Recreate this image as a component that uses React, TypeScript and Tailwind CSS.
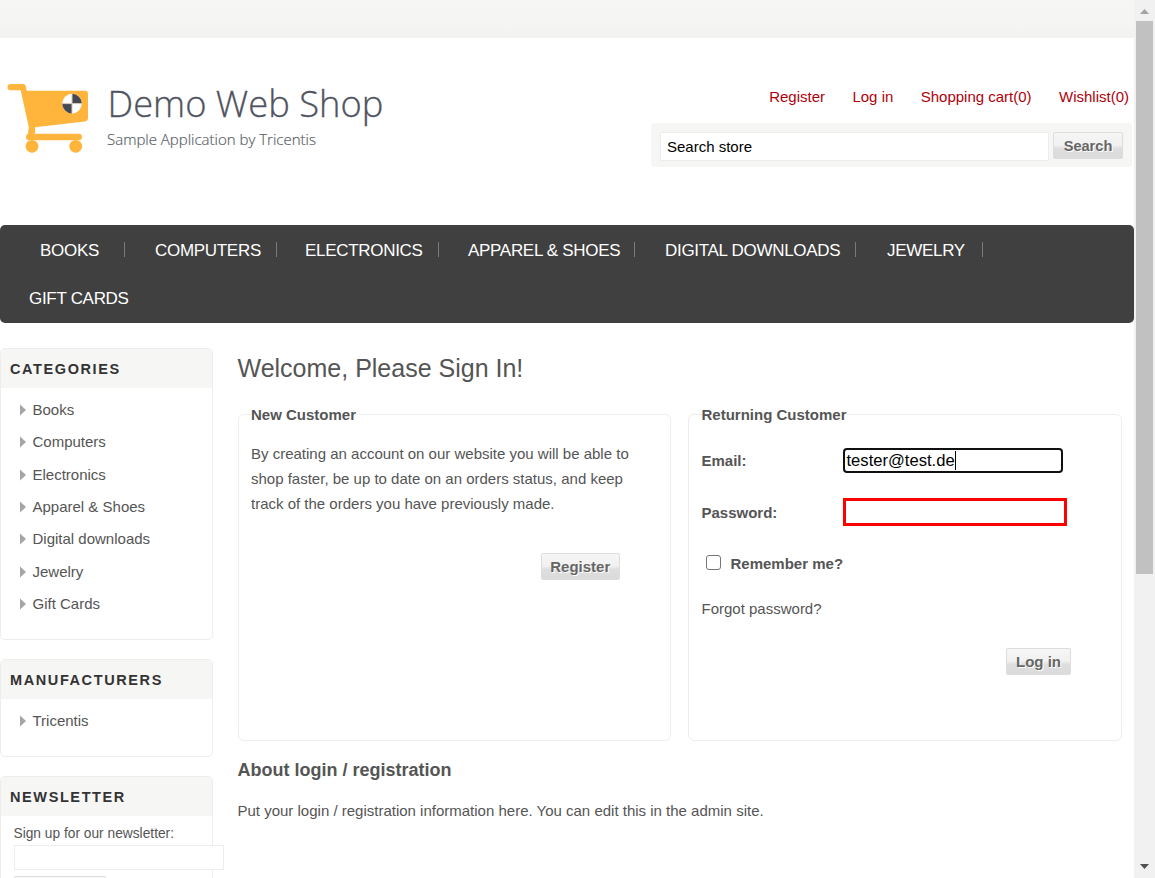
import type { ReactNode } from "react";

const sans = "font-['Liberation_Sans',Arial,sans-serif]";

function Logo() {
  return (
    <div className="flex pl-[7px] pt-[45px]">
      <svg width="82" height="72" viewBox="0 0 82 72" className="block">
        <g fill="#ffb53c">
          <path d="M3.700 1H16.200q2 0 2.500 2L19.700 7.700H78q3 0 3 3V35q0 3-3 3.400L28 44.300V48L27.500 50.700H71.600a3.300 3.300 0 0 1 0 6.600H22.300a3.300 3.300 0 0 1-3.300-3.300q0-2.500 2.500-4L22 45 13.700 7.300H3.700a3.150 3.150 0 0 1 0-6.300Z" />
          <circle cx="24.700" cy="47.700" r="3.500" />
          <circle cx="25" cy="63.300" r="6.400" />
          <circle cx="68.700" cy="63.300" r="6.400" />
        </g>
        <circle cx="65" cy="20.600" r="9.800" fill="#fff" />
        <path d="M65 20.600V10.800a9.800 9.800 0 0 1 9.800 9.800ZM65 20.600V30.400a9.800 9.800 0 0 1-9.800-9.800Z" fill="#454954" />
        <path d="M55.200 20.600H74.800M65 10.800V30.400" stroke="#d8c9b5" strokeWidth="1" />
      </svg>
      <div className="whitespace-nowrap pl-[18.500px] font-['Open_Sans',sans-serif]">
        <div className="-mt-[2px] text-[36.300px] font-light leading-[44px] text-[#50535f] [-webkit-text-stroke:0.300px_#50535f]">Demo Web Shop</div>
        <div className="-ml-[0.500px] pt-[4px] text-[15px] font-light leading-[20px] text-[#5c5f69] [-webkit-text-stroke:0.200px_#5c5f69]">Sample Application by Tricentis</div>
      </div>
    </div>
  );
}

function GrayButton({ children, className }: { children: ReactNode; className: string }) {
  return (
    <button
      className={`block h-[27px] shrink-0 whitespace-nowrap rounded-[2px] border border-[#dddddd] bg-[linear-gradient(#f6f6f6_0%,#f1f1f1_48%,#dedede_62%,#dbdbdb_100%)] text-center font-bold text-[#666] [text-shadow:1px_1px_0_#fff] ${className}`}
    >
      {children}
    </button>
  );
}

function NavItem({ children, className }: { children: ReactNode; className: string }) {
  return (
    <li className={`flex h-[15px] shrink-0 items-center whitespace-nowrap border-r border-[#7b7b7b] pt-[2px] text-[17px] leading-[17px] tracking-[-0.300px] text-white ${className}`}>
      {children}
    </li>
  );
}

function SideItem({ children }: { children: ReactNode }) {
  return (
    <li className="flex h-[32.300px] items-center whitespace-nowrap text-[15px] leading-[20px]">
      <svg width="6" height="12" viewBox="0 0 6 12" className="mr-[6.500px] block">
        <path d="M0 .5 6 6 0 11.500Z" fill="#a5a5a5" />
      </svg>
      {children}
    </li>
  );
}

function Block({ title, className, children }: { title: string; className: string; children: ReactNode }) {
  return (
    <section className={`w-[213px] rounded-[5px] border border-[#ededed] ${className}`}>
      <h3 className="h-[39px] whitespace-nowrap rounded-t-[4px] bg-[#f6f6f5] pl-[9px] text-[14.500px] font-bold leading-[40px] tracking-[1.600px] text-[#333]">
        {title}
      </h3>
      {children}
    </section>
  );
}

export default function App() {
  return (
    <div className={`flex h-[878px] w-[1155px] overflow-hidden bg-white text-[#555] ${sans}`}>
      <div className="w-[1134px] shrink-0">
        <div className="h-[38px] bg-[linear-gradient(#f6f6f5_0%,#f5f5f4_60%,#f2f2f1_100%)]" />
        <header className="flex h-[187px] justify-between">
          <Logo />
          <div className="w-[483px] pt-[49px]">
            <div className="flex h-[20px] justify-end gap-[27.400px] whitespace-nowrap pr-[5px] text-[15px] leading-[20px] text-[#b0000a]">
              <a>Register</a>
              <a>Log in</a>
              <a>Shopping cart(0)</a>
              <a>Wishlist(0)</a>
            </div>
            <div className="mt-[16px] flex h-[44px] w-[481px] rounded-[4px] bg-[#f6f6f5] pl-[9px] pt-[9px]">
              <div className="mr-[4px] h-[29px] w-[389px] border border-[#ededed] bg-white pl-[6px] text-[15px] leading-[28px] text-black">
                Search store
              </div>
              <GrayButton className="w-[70px] text-[14.600px] leading-[27px]">Search</GrayButton>
            </div>
          </div>
        </header>

        <nav className="h-[98px] rounded-[5px] bg-[#404040]">
          <ul className="flex pt-[17px]">
            <NavItem className="w-[125px] pl-[40px]">BOOKS</NavItem>
            <NavItem className="w-[152px] pl-[30px]">COMPUTERS</NavItem>
            <NavItem className="w-[162px] pl-[28px]">ELECTRONICS</NavItem>
            <NavItem className="w-[196px] pl-[29px]">APPAREL &amp; SHOES</NavItem>
            <NavItem className="w-[221px] pl-[30px]">DIGITAL DOWNLOADS</NavItem>
            <NavItem className="w-[127px] pl-[31px]">JEWELRY</NavItem>
          </ul>
          <div className="pl-[29px] pt-[32px] text-[17px] leading-[20px] tracking-[-0.300px] text-white">GIFT CARDS</div>
        </nav>

        <div className="flex pt-[25px]">
          <aside className="w-[238px] shrink-0">
            <Block title="CATEGORIES" className="h-[292px]">
              <ul className="pl-[19px] pt-[6px]">
                <SideItem>Books</SideItem>
                <SideItem>Computers</SideItem>
                <SideItem>Electronics</SideItem>
                <SideItem>Apparel &amp; Shoes</SideItem>
                <SideItem>Digital downloads</SideItem>
                <SideItem>Jewelry</SideItem>
                <SideItem>Gift Cards</SideItem>
              </ul>
            </Block>
            <Block title="MANUFACTURERS" className="mt-[19px] h-[98px]">
              <ul className="pl-[19px] pt-[6px]">
                <SideItem>Tricentis</SideItem>
              </ul>
            </Block>
            <Block title="NEWSLETTER" className="mt-[19px] h-[140px]">
              <div className="pl-[13px] pt-[8px]">
                <div className="h-[20px] whitespace-nowrap text-[13.750px] leading-[20px]">
                  <span className="-ml-[0.500px]">Sign up for our newsletter:</span>
                </div>
                <div className="mt-[1px] h-[25px] w-[210px] border border-[#ededed] bg-white" />
                <div className="mt-[6px] h-[27px] w-[92px] rounded-[2px] border border-[#dddddd] bg-[#f6f6f6]" />
              </div>
            </Block>
          </aside>

          <main className="min-w-0 flex-1">
            <h1 className="-ml-[0.500px] h-[40px] whitespace-nowrap text-[25px] leading-[40px]">Welcome, Please Sign In!</h1>
            <div className="flex gap-[17px] pt-[26px]">
              <section className="h-[327px] w-[433px] rounded-[6px] border border-[#ededed] pl-[12px]">
                <h2 className="-mt-[10px] h-[20px] w-max bg-white text-[15px] font-bold leading-[20px]">New Customer</h2>
                <p className="whitespace-nowrap pt-[16px] text-[15px] leading-[25px]">
                  By creating an account on our website you will be able to
                  <br />
                  shop faster, be up to date on an orders status, and keep
                  <br />
                  track of the orders you have previously made.
                </p>
                <GrayButton className="ml-[290px] mt-[37px] w-[78.500px] text-[15px] leading-[25px]">Register</GrayButton>
              </section>
              <section className="h-[327px] w-[434px] rounded-[6px] border border-[#ededed] pl-[12.500px]">
                <h2 className="-mt-[10px] h-[20px] w-max bg-white text-[15px] font-bold leading-[20px]">Returning Customer</h2>
                <div className="flex pt-[23px]">
                  <label className="w-[141.500px] text-[15px] font-bold leading-[26px]">Email:</label>
                  <div className="flex h-[25px] w-[220px] items-center rounded-[4px] border-2 border-[#101010] pl-[1.500px] text-[16.600px] leading-[20px] text-black">
                    <span>tester@test.de</span>
                    <span className="h-[19px] w-px bg-black" />
                  </div>
                </div>
                <div className="flex pt-[24px]">
                  <label className="w-[141.500px] text-[15px] font-bold leading-[30px]">Password:</label>
                  <div className="h-[28px] w-[224px] border-[3px] border-[#ff0000]" />
                </div>
                <div className="mt-[26px] flex h-[20px] items-center pl-[4.500px]">
                  <span className="-mt-[3px] mr-[9.500px] h-[15px] w-[15px] rounded-[3px] border border-[#767676]" />
                  <span className="text-[15px] font-bold leading-[20px]">Remember me?</span>
                </div>
                <div className="mt-[25px] h-[20px] text-[15px] leading-[20px]">Forgot password?</div>
                <GrayButton className="ml-[304.500px] mt-[29px] w-[65px] text-[15px] leading-[25px]">Log in</GrayButton>
              </section>
            </div>
            <h2 className="-ml-[0.500px] mt-[17px] h-[24px] whitespace-nowrap text-[18px] font-bold leading-[24px]">About login / registration</h2>
            <p className="-ml-[0.500px] mt-[19px] whitespace-nowrap text-[15px] leading-[20px]">
              Put your login / registration information here. You can edit this in the admin site.
            </p>
          </main>
        </div>
      </div>

      <div className="flex w-[21px] shrink-0 flex-col items-center bg-[#f1f1f1]">
        <svg width="9" height="5" viewBox="0 0 9 5" className="mt-[9px] block">
          <path d="M4.500 0 9 5H0Z" fill="#a3a3a3" />
        </svg>
        <div className="mt-[7px] h-[553px] w-[17px] bg-[#c1c1c1]" />
        <svg width="9" height="5" viewBox="0 0 9 5" className="mt-[290px] block">
          <path d="M0 0H9L4.500 5Z" fill="#505050" />
        </svg>
      </div>
    </div>
  );
}
